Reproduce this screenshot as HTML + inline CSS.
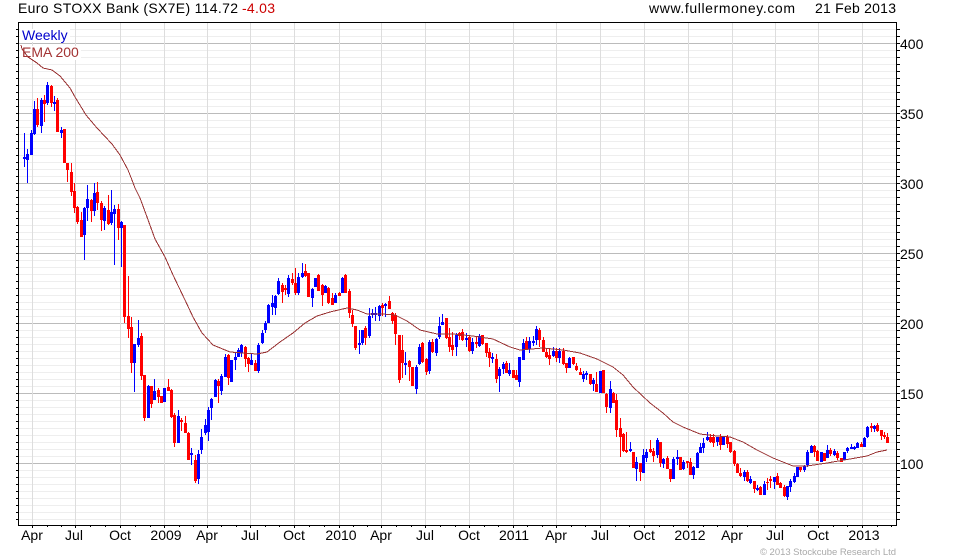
<!DOCTYPE html>
<html>
<head>
<meta charset="utf-8">
<style>
html,body{margin:0;padding:0;background:#fff}
svg{display:block}
text{font-family:"Liberation Sans",Arial,sans-serif;font-size:14px;fill:#000}
.x text{text-anchor:middle}
</style>
</head>
<body>
<svg width="980" height="560" viewBox="0 0 980 560" xmlns="http://www.w3.org/2000/svg">
<rect width="980" height="560" fill="#fff"/>
<g shape-rendering="crispEdges" fill="none">
<path d="M458 29V526" stroke="#eee" stroke-width="878" stroke-dasharray="1 6"/>
<path d="M19 43.5H897M19 113.5H897M19 183.5H897M19 253.5H897M19 323.5H897M19 393.5H897M19 463.5H897" stroke="#bbb"/>
<path d="M32.5 23V525M75.5 23V525M120.5 23V525M164.5 23V525M207.5 23V525M250.5 23V525M294.5 23V525M339.5 23V525M381.5 23V525M425.5 23V525M469.5 23V525M513.5 23V525M556.5 23V525M600.5 23V525M644.5 23V525M688.5 23V525M732.5 23V525M775.5 23V525M818.5 23V525M862.5 23V525" stroke="#ddd"/>
<rect x="20" y="29" width="50" height="13" fill="#fff"/>
<rect x="20" y="46" width="61" height="14" fill="#fff"/>
<!-- red wicks -->
<path stroke="#f00" stroke-width="1" d="M37.5 98V127M44.5 95V122M51.5 85V107M57.5 98V132M64.5 129V163M67.5 163V182M71.5 163V196M74.5 183V213M77.5 206V224M81.5 212V237M91.5 199V222M97.5 182V210M101.5 201V231M108.5 195V225M118.5 204V240M124.5 225V323M128.5 276V338M131.5 317V373M141.5 333V380M144.5 375V421M151.5 386V408M158.5 388V403M161.5 396V403M168.5 379V391M171.5 389V418M174.5 413V447M181.5 418V431M185.5 416V433M188.5 432V460M195.5 455V483M218.5 379V403M228.5 354V385M245.5 346V367M248.5 357V372M255.5 360V371M282.5 283V303M285.5 285V295M292.5 273V285M295.5 268V295M305.5 264V277M308.5 273V297M318.5 274V291M322.5 284V306M328.5 287V304M332.5 293V305M339.5 292V296M345.5 274V293M349.5 289V318M352.5 310V327M355.5 326V350M365.5 326V345M382.5 303V316M389.5 296V309M392.5 312V324M395.5 313V345M399.5 335V383M402.5 335V378M409.5 360V381M412.5 367V386M422.5 342V363M426.5 358V375M432.5 339V353M446.5 318V339M449.5 328V352M452.5 332V356M459.5 332V340M462.5 329V341M469.5 336V352M476.5 337V348M482.5 335V345M486.5 343V357M489.5 348V367M496.5 354V383M506.5 361V373M513.5 370V378M516.5 370V380M526.5 337V350M539.5 328V347M543.5 337V352M546.5 348V358M549.5 348V365M556.5 348V362M563.5 348V365M566.5 363V373M573.5 357V365M576.5 363V371M580.5 368V375M590.5 374V385M596.5 372V392M603.5 370V393M606.5 393V413M613.5 392V403M616.5 394V437M620.5 418V457M623.5 433V452M626.5 432V453M633.5 452V468M640.5 463V481M650.5 440V453M653.5 448V462M660.5 442V467M667.5 456V469M670.5 469V482M680.5 457V470M687.5 461V468M690.5 458V475M710.5 434V443M713.5 434V447M720.5 434V450M727.5 435V448M730.5 442V453M734.5 450V466M737.5 463V473M740.5 468V477M747.5 470V482M754.5 481V493M760.5 486V495M767.5 478V490M770.5 476V488M777.5 473V485M780.5 482V488M784.5 485V497M800.5 467V472M814.5 445V457M817.5 450V461M824.5 453V461M830.5 448V456M837.5 451V460M841.5 458V462M861.5 442V447M871.5 423V432M877.5 423V432M881.5 430V440M884.5 432V439M887.5 433V443"/>
<!-- red bodies -->
<path stroke="#f00" stroke-width="3" d="M37.5 109V125M44.5 100V104M51.5 86V103M57.5 100V132M64.5 129V163M67.5 163V170M71.5 172V192M74.5 191V208M77.5 207V222M81.5 220V237M91.5 200V211M97.5 192V203M101.5 203V220M108.5 210V224M118.5 209V228M124.5 225V317M128.5 316V329M131.5 327V363M141.5 336V376M144.5 375V418M151.5 386V404M158.5 390V397M161.5 396V403M168.5 387V391M171.5 390V417M174.5 415V443M181.5 420V422M185.5 423V433M188.5 433V460M195.5 460V481M218.5 381V386M228.5 355V378M245.5 347V359M248.5 358V364M255.5 363V371M282.5 285V292M285.5 288V290M292.5 279V283M295.5 283V293M305.5 271V276M308.5 273V297M318.5 275V291M322.5 285V295M328.5 288V303M332.5 298V305M339.5 293V296M345.5 275V293M349.5 291V313M352.5 315V324M355.5 326V348M365.5 328V338M382.5 305V308M389.5 301V309M392.5 313V321M395.5 315V334M399.5 335V380M402.5 350V363M409.5 361V367M412.5 367V386M422.5 343V362M426.5 359V372M432.5 342V352M446.5 318V338M449.5 337V347M452.5 345V350M459.5 333V336M462.5 332V340M469.5 337V351M476.5 342V344M482.5 335V344M486.5 343V353M489.5 352V358M496.5 359V379M506.5 363V373M513.5 370V378M516.5 375V380M526.5 341V350M539.5 330V340M543.5 340V352M546.5 352V357M549.5 355V359M556.5 351V358M563.5 351V364M566.5 363V368M573.5 357V364M576.5 366V370M580.5 372V375M590.5 374V384M596.5 384V392M603.5 370V393M606.5 394V407M613.5 393V403M616.5 400V430M620.5 428V437M623.5 434V451M626.5 450V452M633.5 452V468M640.5 463V472M650.5 449V452M653.5 451V456M660.5 442V463M667.5 458V469M670.5 469V479M680.5 457V470M687.5 461V463M690.5 462V475M710.5 437V442M713.5 437V443M720.5 437V445M727.5 437V444M730.5 442V452M734.5 451V464M737.5 464V473M740.5 473V476M747.5 472V481M754.5 481V489M760.5 487V495M767.5 482V483M770.5 479V481M777.5 476V485M780.5 483V488M784.5 487V496M800.5 467V470M814.5 446V452M817.5 451V461M824.5 453V461M830.5 450V454M837.5 453V458M841.5 458V462M861.5 444V447M871.5 426V428M877.5 425V431M881.5 430V436M884.5 435V437M887.5 437V443"/>
<!-- blue wicks -->
<path stroke="#00f" stroke-width="1" d="M24.5 133V167M27.5 149V183M31.5 130V155M34.5 101V135M41.5 98V133M47.5 82V105M54.5 96V111M61.5 127V138M84.5 207V260M87.5 185V221M94.5 183V216M104.5 206V230M111.5 190V225M114.5 205V265M121.5 221V267M134.5 344V392M138.5 320V347M148.5 385V418M154.5 379V400M164.5 388V402M178.5 410V443M191.5 448V465M198.5 450V484M201.5 429V454M205.5 419V435M208.5 407V441M211.5 398V420M215.5 379V397M221.5 374V395M225.5 354V377M231.5 360V382M235.5 353V370M238.5 348V357M241.5 344V357M251.5 353V365M258.5 343V373M262.5 330V344M265.5 321V333M268.5 304V323M272.5 295V315M275.5 295V315M278.5 278V295M288.5 275V297M298.5 273V295M302.5 263V278M312.5 288V307M315.5 278V287M325.5 285V293M335.5 293V303M342.5 277V293M359.5 330V354M362.5 330V345M369.5 308V338M372.5 309V318M375.5 307V321M379.5 305V321M385.5 303V317M405.5 352V375M416.5 365V394M419.5 344V365M429.5 340V374M436.5 338V356M439.5 317V339M442.5 314V325M456.5 333V356M466.5 333V347M472.5 338V354M479.5 334V347M492.5 353V363M499.5 367V392M503.5 362V374M509.5 363V376M519.5 357V387M523.5 339V360M529.5 337V353M533.5 336V346M536.5 326V345M553.5 347V357M559.5 348V363M569.5 357V368M583.5 371V382M586.5 371V380M593.5 378V391M600.5 371V393M610.5 381V413M630.5 442V452M636.5 457V481M643.5 449V473M646.5 449V462M657.5 438V458M663.5 458V468M673.5 457V479M677.5 450V465M683.5 460V470M693.5 466V479M697.5 452V468M700.5 443V453M703.5 438V453M707.5 432V441M717.5 437V446M723.5 437V445M744.5 470V481M750.5 476V484M757.5 485V491M764.5 481V495M774.5 477V489M787.5 486V500M790.5 479V492M794.5 473V483M797.5 467V477M804.5 465V472M807.5 450V467M811.5 445V453M821.5 452V462M827.5 445V458M834.5 449V456M844.5 452V460M847.5 447V453M851.5 444V449M854.5 446V450M857.5 442V448M864.5 437V447M867.5 426V438M874.5 425V432"/>
<!-- blue bodies -->
<path stroke="#00f" stroke-width="3" d="M24.5 157V159M27.5 154V160M31.5 133V155M34.5 109V134M41.5 100V126M47.5 85V103M54.5 102V104M61.5 130V133M84.5 208V235M87.5 199V208M94.5 193V211M104.5 208V221M111.5 212V223M114.5 209V214M121.5 222V228M134.5 344V363M138.5 338V345M148.5 386V418M154.5 391V400M164.5 388V402M178.5 416V443M191.5 453V455M198.5 454V479M201.5 437V450M205.5 425V433M208.5 410V432M211.5 399V408M215.5 380V397M221.5 376V391M225.5 357V377M231.5 360V382M235.5 357V360M238.5 350V357M241.5 345V353M251.5 360V365M258.5 345V371M262.5 333V343M265.5 323V330M268.5 305V323M272.5 303V307M275.5 296V308M278.5 281V294M288.5 278V294M298.5 277V293M302.5 273V277M312.5 289V298M315.5 278V287M325.5 286V293M335.5 295V303M342.5 278V293M359.5 343V345M362.5 330V343M369.5 316V336M372.5 313V315M375.5 313V315M379.5 306V316M385.5 304V306M405.5 363V365M416.5 367V389M419.5 347V364M429.5 342V371M436.5 339V353M439.5 326V337M442.5 322V325M456.5 335V347M466.5 338V340M472.5 342V351M479.5 336V346M492.5 357V359M499.5 369V376M503.5 364V369M509.5 370V374M519.5 357V382M523.5 343V360M529.5 341V349M533.5 341V343M536.5 329V340M553.5 351V356M559.5 351V358M569.5 358V368M583.5 374V379M586.5 373V375M593.5 380V384M600.5 371V393M610.5 389V408M630.5 449V451M636.5 462V469M643.5 455V473M646.5 452V458M657.5 440V455M663.5 459V464M673.5 459V479M677.5 457V459M683.5 462V469M693.5 467V475M697.5 453V468M700.5 447V453M703.5 443V448M707.5 437V440M717.5 437V442M723.5 437V445M744.5 472V477M750.5 479V483M757.5 488V490M764.5 484V495M774.5 477V482M787.5 486V497M790.5 481V487M794.5 476V482M797.5 467V477M804.5 466V470M807.5 452V465M811.5 446V453M821.5 452V462M827.5 450V458M834.5 451V455M844.5 452V460M847.5 448V451M851.5 447V449M854.5 447V449M857.5 443V448M864.5 438V447M867.5 427V437M874.5 426V429"/>
<!-- axes -->
<path stroke="#000" stroke-width="1" d="M18 22.5H897M18.5 22V526M896.5 22V526M18 525.5H897"/>
<path stroke="#000" stroke-width="2" stroke-dasharray="1 6" d="M17 29V526"/>
<path stroke="#000" stroke-width="3" stroke-dasharray="1 6" d="M898.5 29V526"/>
<path stroke="#000" d="M16 43.5H18M16 113.5H18M16 183.5H18M16 253.5H18M16 323.5H18M16 393.5H18M16 463.5H18"/>
<path stroke="#000" d="M32.5 525V528M75.5 525V528M120.5 525V528M164.5 525V528M207.5 525V528M250.5 525V528M294.5 525V528M339.5 525V528M381.5 525V528M425.5 525V528M469.5 525V528M513.5 525V528M556.5 525V528M600.5 525V528M644.5 525V528M688.5 525V528M732.5 525V528M775.5 525V528M818.5 525V528M862.5 525V528"/>
<path stroke="#000" d="M47.5 525V527M61.5 525V527M90.5 525V527M105.5 525V527M135.5 525V527M150.5 525V527M179.5 525V527M193.5 525V527M221.5 525V527M236.5 525V527M265.5 525V527M279.5 525V527M309.5 525V527M324.5 525V527M353.5 525V527M367.5 525V527M396.5 525V527M411.5 525V527M440.5 525V527M455.5 525V527M484.5 525V527M498.5 525V527M527.5 525V527M542.5 525V527M571.5 525V527M585.5 525V527M615.5 525V527M629.5 525V527M659.5 525V527M673.5 525V527M703.5 525V527M717.5 525V527M747.5 525V527M761.5 525V527M790.5 525V527M804.5 525V527M833.5 525V527M847.5 525V527M877.5 525V527M891.5 525V527"/>
<!-- EMA -->
<polyline fill="none" stroke="#993333" stroke-width="1" points="21,45 22,49 28,57 37,63 43,68 52,70 60,76 70,88 75,97 86,115 97,128 112,144 120,155 128,170 132,180 135,188 140,198 147,217 155,239 165,257 173,275 185,300 193,317 202,333 213,345 230,352 243,353 257,354 267,352 280,342 293,333 305,323 317,316 330,312 347,308 357,310 367,314 383,314 395,315 407,321 420,330 437,334 453,334 473,336 493,339 510,347 520,350 543,348 563,350 580,353 597,359 613,367 623,375 633,387 650,403 663,413 673,422 683,427 700,434 717,436 730,437 743,442 757,450 773,458 783,462 793,466 807,466 827,463 850,459 867,456 877,452 887,450"/>
</g>
<!-- text -->
<text x="18" y="13" textLength="220" lengthAdjust="spacing">Euro STOXX Bank (SX7E) 114.72</text>
<text x="242" y="13" textLength="33" lengthAdjust="spacing" style="fill:#cc0000">-4.03</text>
<text x="649" y="13" textLength="146" lengthAdjust="spacing">www.fullermoney.com</text>
<text x="815" y="13" textLength="81" lengthAdjust="spacing">21 Feb 2013</text>
<text x="22" y="40" style="fill:#0000cc">Weekly</text>
<text x="22" y="57" style="fill:#a33333">EMA 200</text>
<text x="900" y="49">400</text>
<text x="900" y="119">350</text>
<text x="900" y="189">300</text>
<text x="900" y="259">250</text>
<text x="900" y="329">200</text>
<text x="900" y="399">150</text>
<text x="900" y="469">100</text>
<g class="x">
<text x="32" y="540">Apr</text>
<text x="74" y="540">Jul</text>
<text x="120" y="540">Oct</text>
<text x="166" y="540">2009</text>
<text x="207" y="540">Apr</text>
<text x="250" y="540">Jul</text>
<text x="294" y="540">Oct</text>
<text x="341" y="540">2010</text>
<text x="381" y="540">Apr</text>
<text x="425" y="540">Jul</text>
<text x="469" y="540">Oct</text>
<text x="514" y="540">2011</text>
<text x="556" y="540">Apr</text>
<text x="600" y="540">Jul</text>
<text x="644" y="540">Oct</text>
<text x="690" y="540">2012</text>
<text x="732" y="540">Apr</text>
<text x="775" y="540">Jul</text>
<text x="818" y="540">Oct</text>
<text x="864" y="540">2013</text>
</g>
<text x="760" y="555" textLength="136" lengthAdjust="spacing" style="font-size:9.5px;fill:#aaaaaa">© 2013 Stockcube Research Ltd</text>
</svg>
</body>
</html>
